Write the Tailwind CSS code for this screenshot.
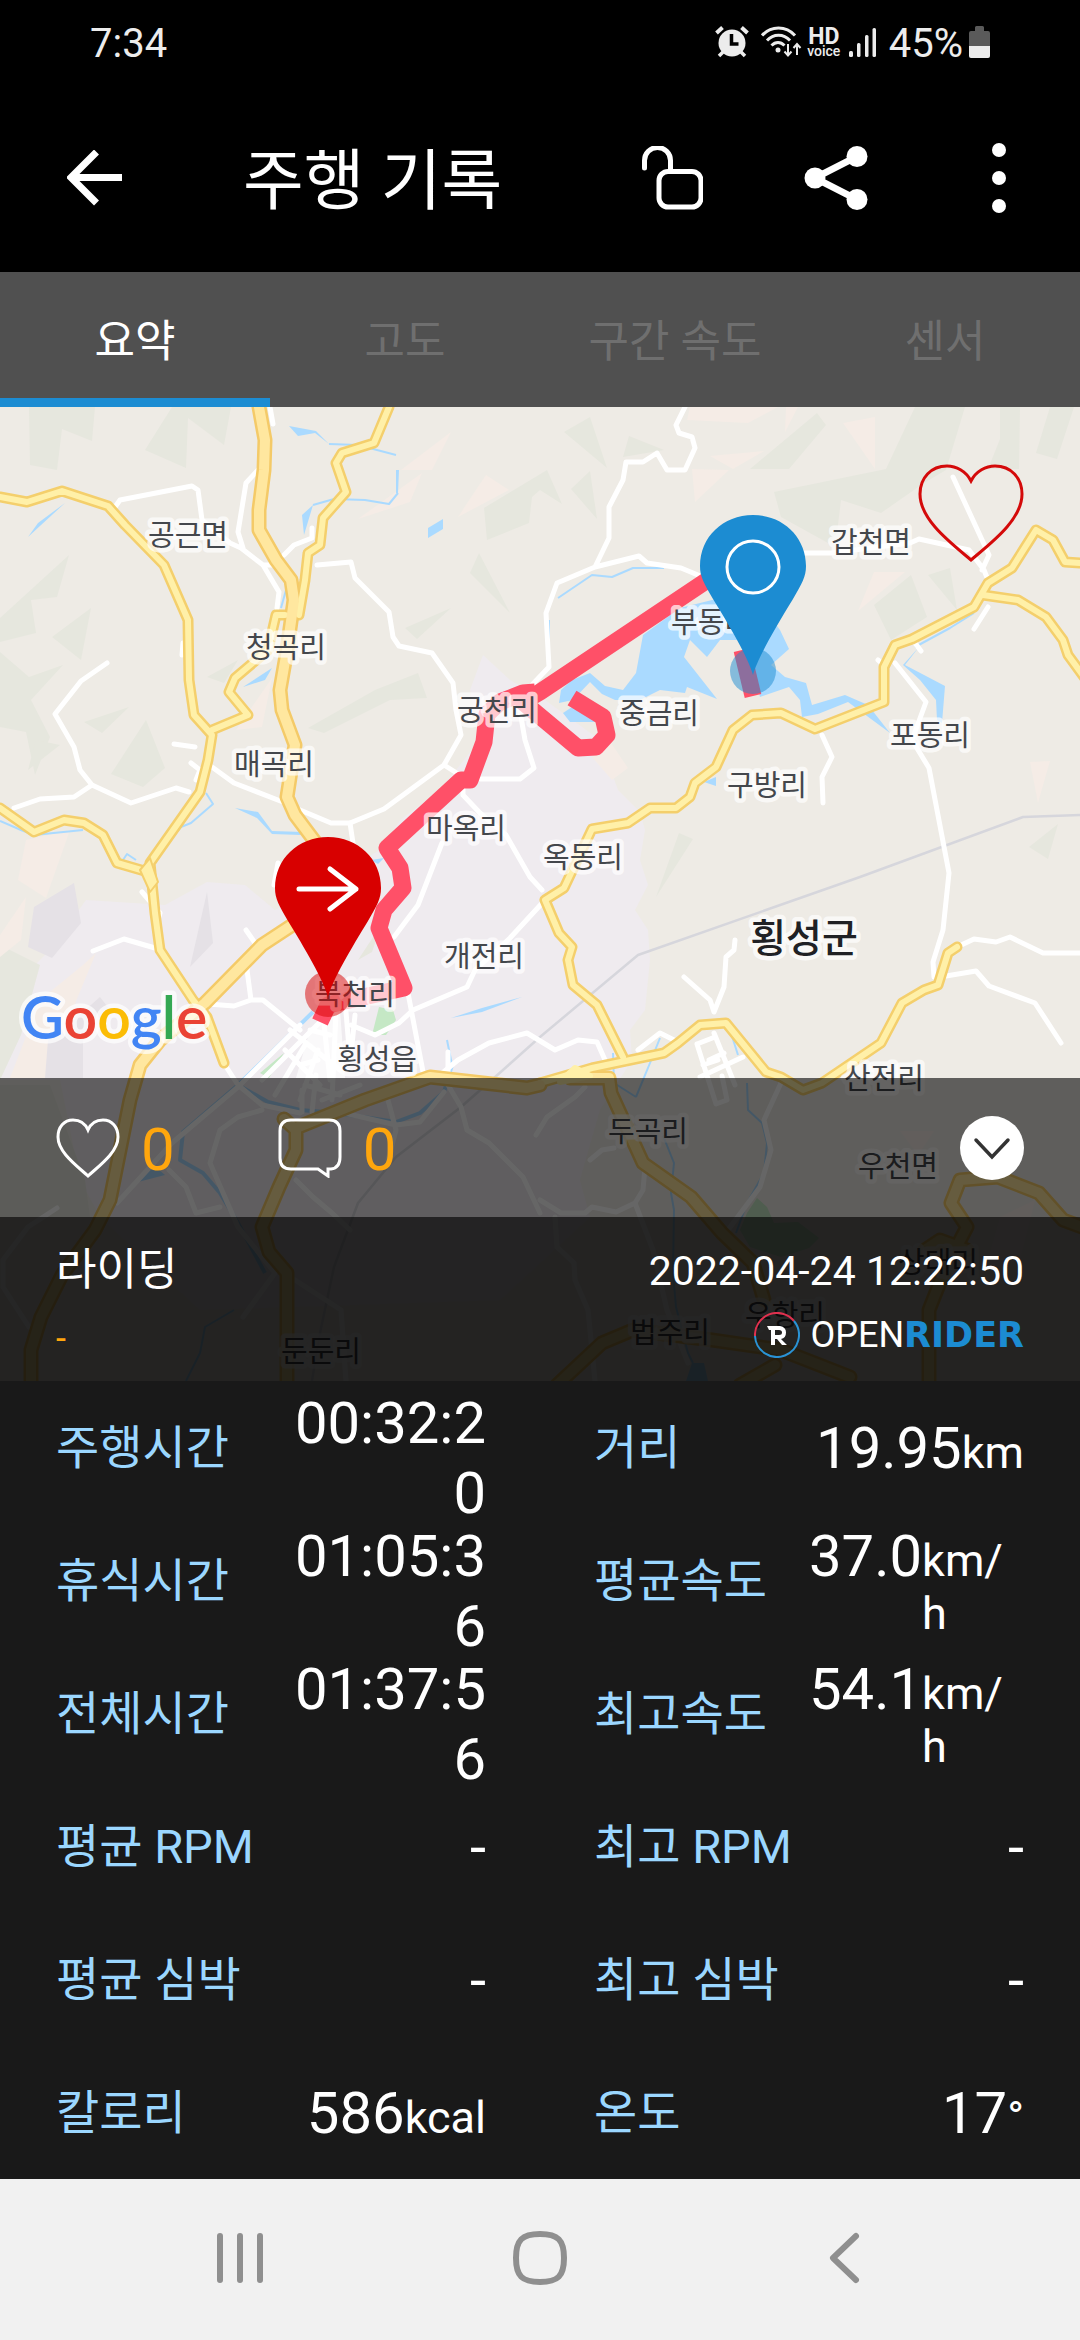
<!DOCTYPE html>
<html lang="ko">
<head>
    <meta charset="UTF-8">
    <meta name="viewport" content="width=device-width, initial-scale=1.0">
    <title>주행 기록</title>
    <script src="https://cdn.jsdelivr.net/npm/@tailwindcss/browser@4"></script>
</head>
<body class="min-h-screen flex flex-col bg-[#191919] text-white font-[Roboto,'Noto_Sans_CJK_KR',sans-serif]">

    <!-- Status bar -->
    <div class="h-[84px] flex items-center justify-between pl-[90px] pr-[90px] bg-black text-[40px] leading-none text-[#ececec]">
        <span class="pt-1">7:34</span>
        <div class="flex items-center">
            <svg class="w-[34px] h-[32px]" viewBox="0 0 34 32" fill="none" stroke="#ececec">
                <circle cx="17" cy="17" r="13.500" fill="#ececec" stroke="none"/>
                <path d="M1.500 7l6-5.500M32.500 7l-6-5.500" stroke-width="4"/>
                <path d="M8 26l-4 4M26 26l4 4" stroke-width="3.500"/>
                <path d="M16.500 8v10h7" stroke="#000" stroke-width="3.500"/>
            </svg>
            <svg class="ml-3 w-[41px] h-[32px]" viewBox="0 0 41 32" fill="none" stroke="#ececec" stroke-width="3">
                <path d="M1 9.500C10-.5 25-.5 34 9.500M6 14.500c6.500-7 16.500-7 23 0M10.500 19.500c4-4 9-4 13 0"/>
                <circle cx="17" cy="24" r="2.500" fill="#ececec" stroke="none"/>
                <path d="M27 18v11M23.500 25.500l3.500 4 3.500-4M36 29V18M32.500 22l3.500-4 3.500 4" stroke-width="2"/>
            </svg>
            <div class="ml-[5px] w-[34px] flex flex-col items-center">
                <span class="text-[23px] leading-[17px] font-bold">HD</span>
                <span class="text-[14px] leading-[12px] font-medium">voice</span>
            </div>
            <svg class="ml-2 w-[28px] h-[32px]" viewBox="0 0 28 32" fill="#ececec">
                <rect x="0" y="25" width="4" height="6" rx="1.500"/>
                <rect x="8" y="17" width="3.500" height="14" rx="1.500"/>
                <rect x="16" y="9" width="3.500" height="22" rx="1.500"/>
                <rect x="23.500" y="2" width="3.500" height="29" rx="1.500"/>
            </svg>
            <span class="ml-3 pt-1">45%</span>
            <svg class="ml-[6px] w-[21px] h-[32px]" viewBox="0 0 21 32">
                <path d="M6 1.500Q6 0 7.500 0h6Q15 0 15 1.500V5h4q2 0 2 2v13H0V7q0-2 2-2h4z" fill="#5a5a5a"/>
                <path d="M0 20h21v10q0 2-2 2H2q-2 0-2-2z" fill="#ececec"/>
            </svg>
        </div>
    </div>

    <!-- Title bar -->
    <header class="h-[188px] flex items-center pl-[67px] pr-[73px] bg-black">
        <button type="button" aria-label="뒤로">
            <svg class="block w-14 h-14" viewBox="0 0 56 56" fill="none" stroke="#fff" stroke-width="7">
                <path d="M55 27.500H6M29.500 2L4 27.500 29.500 53"/>
            </svg>
        </button>
        <h1 class="ml-[120px] pt-2 text-[66px] leading-none">주행 기록</h1>
        <button type="button" class="ml-auto" aria-label="잠금 해제">
            <svg class="block w-[62px] h-[64px]" viewBox="0 0 62 64" fill="none" stroke="#fff" stroke-width="5" stroke-linecap="round">
                <path d="M3.500 22V14.500a13 13 0 0 1 26 0V25"/>
                <rect x="18" y="25.500" width="42" height="35.500" rx="9"/>
            </svg>
        </button>
        <button type="button" class="ml-[101px]" aria-label="공유">
            <svg class="block w-[64px] h-[64px]" viewBox="0 0 64 64" fill="#fff">
                <path d="M53 10.500L11 32l42 21.500" fill="none" stroke="#fff" stroke-width="7"/>
                <circle cx="11" cy="32" r="10.500"/><circle cx="53" cy="10.500" r="10.500"/><circle cx="53" cy="53.500" r="10.500"/>
            </svg>
        </button>
        <button type="button" class="ml-[123px]" aria-label="더보기">
            <svg class="block w-4 h-[72px]" viewBox="0 0 16 72" fill="#fff">
                <circle cx="8" cy="8" r="7"/><circle cx="8" cy="36" r="7"/><circle cx="8" cy="64" r="7"/>
            </svg>
        </button>
    </header>

    <!-- Tabs -->
    <nav class="h-[135px] grid grid-cols-4 bg-[#505050] text-[44px] leading-none text-[#6f6f6f]">
        <button type="button" class="pt-1 border-t-[9px] border-t-transparent border-b-[9px] border-b-[#1c8cd2] text-white">요약</button>
        <button type="button" class="pt-1">고도</button>
        <button type="button" class="pt-1">구간 속도</button>
        <button type="button" class="pt-1">센서</button>
    </nav>

    <!-- Map with the overlay bars -->
    <section class="relative overflow-hidden">
        <svg class="absolute inset-0 w-full h-full" viewBox="0 407 1080 974" preserveAspectRatio="xMidYMin slice" stroke-linejoin="round">
            <defs>
                <g id="minor" fill="none">
                    <path d="M0 497L27 502 62 491 108 506 125 525 164 565 188 620 189 680 194 715 212 735 208 760 200 792 150 863 155 913 160 950 193 1000 207 1017 224 1063"/>
                    <path d="M389 407L374 443 342 453 336 463 346 492 323 518 320 545 308 553 305 580 299 615M285 615H276L268 650 235 678 229 692 248 715 212 730"/>
                    <path d="M0 808L34 832 64 820 84 823 103 835 117 863 148 872"/>
                    <path d="M1080 563L1065 562 1053 540 1036 530 1012 568 988 583 974 607 912 639 895 645 884 667 884 702 815 729 781 713 752 715 733 730 716 767 695 783 690 797 676 808 650 808 628 823 592 829 564 888 545 900 559 933 572 947 568 960 573 985 597 1005 623 1057"/>
                    <path d="M983 595L1018 600 1046 617 1063 640 1068 655 1090 685"/>
                    <path d="M957 947L948 953 938 985 924 990 902 1003 881 1043 822 1083 803 1090 781 1077 766 1072 726 1023 700 1025 678 1043 664 1053 592 1068 540 1083"/>
                </g>
                <g id="major" fill="none">
                    <path d="M259 407L265 440 264 470 259 510 259 530 276 560 291 580 294 600 287 650 280 690 282 710 295 745 287 797 295 815 325 855"/>
                    <path d="M300 920L262 945 205 1003 160 1040 140 1065 130 1100 110 1200 95 1230 62 1275 41 1317 31 1350V1390"/>
                    <path d="M540 1085L527 1088 430 1077 365 1100 296 1128 296 1150 279 1187 262 1227 269 1252 287 1273V1390M284 1119L296 1130"/>
                    <path d="M570 1078H609L611 1093 643 1163 691 1197 722 1233 753 1263 764 1300"/>
                    <path d="M1090 1230L1063 1220 1039 1193 998 1177 960 1180 951 1203 967 1227 946 1267 929 1310V1390"/>
                    <path d="M557 1385L602 1343 633 1330 712 1340 781 1350 850 1377M740 1385L775 1365M967 1250L940 1240 925 1250"/>
                </g>
                <g id="pin">
                    <path d="M0 0C-4-16-24-50-40-76C-49-92-53-98-53-109C-53-138-30-160 0-160S53-138 53-109C53-98 49-92 40-76C24-50 4-16 0 0Z"/>
                </g>
            </defs>

            <!-- land -->
            <rect y="407" width="1080" height="974" fill="#eeebe5"/>
            <path fill="#efebef" d="M0 1000L50 950 86 900 165 905 207 882 245 885 275 910 380 850 400 820 440 790 480 740 470 690 483 655 510 680 545 700 600 740 618 790 640 812 645 830 640 860 648 885 635 910 648 930 650 960 645 1010 630 1030 632 1060 600 1110 580 1180 590 1217 500 1300 200 1310 100 1217 80 1180 60 1080 0 1080Z"/>
            <g fill="#e6e7de">
                <path d="M29 407H95L92 441 62 429 57 470 30 465ZM172 407H231L224 445 188 418 186 468 145 450ZM69 555L57 597 31 600 36 633 0 642V618ZM91 608L81 660 52 637ZM0 652L29 677 63 665 31 700 50 737 35 775 26 732 0 727ZM84 722L129 707 102 733ZM146 720L165 768 143 787 111 774ZM479 553L510 613 470 573ZM451 608L417 639 405 628ZM418 673L427 698 390 700 324 733 308 728 375 690ZM547 470L484 508 487 540 529 523 532 497 540 490 562 504ZM207 677L238 660 224 683Z"/>
                <path d="M564 432L590 417 607 468ZM629 436L664 450 623 457ZM571 489L590 471 597 519ZM750 469L817 413 826 425 789 469ZM915 407H965L946 470 924 483 881 513 841 500 837 533 828 543 781 517 774 492 886 469ZM1000 407H1020L1019 469H988L1000 439ZM1050 407H1074L1057 459 1036 453ZM911 575L927 617 891 640 874 605ZM950 568L957 610 928 575Z"/>
                <path d="M679 833L693 839 656 897ZM1058 824L1048 859 1029 847ZM381 925L358 960 372 952ZM0 945L40 965 21 1035 0 1080ZM0 1085H50L85 1180 90 1217H0ZM28 770L36 740 60 745Z"/>
            </g>
            <g fill="#f5ece6">
                <path d="M451 432L432 470H401ZM422 473L410 502 358 519ZM486 475L509 490 458 517ZM272 678L262 727 236 730ZM690 407H778L748 423 687 420ZM786 407H798L785 432ZM843 423L875 417V469ZM710 456L764 451 733 469ZM692 469L729 470 695 502ZM874 572H905L858 611Z"/>
                <path d="M1030 762L1050 761 1038 803ZM609 740L628 768 612 780 592 757ZM26 840L70 830 46 898 18 880ZM26 897L21 940 0 957V935ZM96 953L64 1030 45 1078 10 1078 40 1000 83 965ZM900 1131H934L918 1155ZM1035 1200L1000 1217 985 1270 1020 1260Z"/>
            </g>
            <g fill="#e5e1e6">
                <path d="M74 883L81 923 52 958 28 947 34 907ZM207 892L213 943 190 967ZM100 997L110 1010 83 1040V1078H45L48 1040 74 1020Z"/>
            </g>
            <g fill="#c5e8c5">
                <path d="M379 1007L393 1010 396 1020 386 1035H372ZM284 1053L269 1078 260 1073ZM757 1198L767 1207 774 1223 798 1222 819 1238 809 1248 781 1257 750 1247 740 1230 747 1213Z"/>
            </g>

            <!-- water -->
            <g fill="#aadaff">
                <path d="M712 600L680 608 643 635 636 673 623 690 605 686 590 673 572 680 561 690 559 703 573 700 590 682 602 694 615 700H640L660 690 685 693 687 687 717 699 684 657 690 640 707 657 720 640H745L760 697 789 687 800 700 802 717 818 714 848 702 890 733 868 705 845 695 812 705 806 683 785 677 771 665 789 649 780 630 765 610 740 600Z"/>
                <path d="M563 713L570 722 595 722 575 705ZM919 647L905 665 945 686 942 723 937 720 936 700 920 680 903 665ZM289 426L316 431 329 444 315 433 298 436ZM428 528L443 519V529L428 538ZM65 503L38 523 28 537ZM243 687L272 668 265 680ZM235 808L258 812 272 831 303 832 301 835 272 834 257 818ZM704 782L716 777V786ZM138 1182L165 1175 150 1162ZM451 1018L482 1008 522 997 482 1012ZM692 1363H704L708 1381H686ZM302 515L313 505 304 535ZM396 470H399L398 493H396ZM371 860L384 858 378 864Z"/>
            </g>
            <g fill="none" stroke="#aadaff" stroke-width="2">
                <path d="M329 444L358 445 396 455M398 493L389 504 365 500 334 499 313 505M286 590L281 608M558 598L592 575 612 577 633 568H664M974 613L950 628 915 647M206 793L213 804 191 823 181 827 157 855M0 821L21 830 34 835 83 830M123 860L127 854 136 860M660 1038L650 1063 636 1097M613 1053L614 1083 636 1097M662 1133L674 1163 671 1193 674 1210 673 1273 676 1307 688 1353 693 1363M747 1083L748 1110 762 1123 767 1143 764 1173 747 1203 736 1233M452 1065L447 1040M234 1310L205 1327 200 1353 186 1381M730 1030L738 1055M549 620V665"/>
                <path stroke-width="4" d="M313 1012L238 1085 183 1132 180 1160 203 1173 220 1193 238 1223 265 1273M238 1085L268 1102 300 1110 337 1113 396 1122 420 1113 444 1092 452 1065"/>
            </g>

            <!-- power line -->
            <path fill="none" stroke="#d6d6dc" stroke-width="2.500" d="M1080 815L1023 817 860 877 638 955 540 1037 503 1070 461 1107 396 1157 358 1203 334 1267 320 1333 312 1381"/>

            <!-- local roads -->
            <g fill="none" stroke="#fff" stroke-width="5" stroke-linecap="round">
                <path d="M115 507L120 500 192 486 198 490 202 520 230 543 241 548 263 565 279 592 277 608M258 470L246 483 238 532 243 548M263 565H274M317 565L351 562 355 578 389 612 393 637 399 646 432 653 453 683 456 710 461 735 444 765 384 809 350 823H331L300 810 283 802 234 783 212 767M312 528V538L294 545 284 555M270 407L273 424M183 643L182 655"/>
                <path d="M107 663L81 681 55 714 74 747 80 770 92 785 74 797 40 799 14 808M92 785L131 803 176 788 189 792M174 744L195 747M191 763L200 770 196 780M350 823L353 843M142 892L160 913 157 923M93 951L124 939 155 948M246 930L255 943 247 970 251 1000H263L300 1030M208 1004L234 1006 251 1000M278 863L274 885"/>
                <path d="M463 795L480 813 506 835 530 877 542 890M442 843L418 905 394 937M545 900L510 938 475 970 467 987 413 1010 399 1023 375 1035 351 1025M408 993L424 1077M480 779H520L534 768 525 740 518 700M444 765L463 777 463 795M440 1075L458 1060 489 1043 527 1033 555 1050 578 1040 597 1042 605 1060"/>
                <path d="M685 407L676 425 679 433 692 437 695 448 685 470H667L657 453 643 462H626L623 480 609 507V538L595 567M710 580L681 568 647 563 639 556 595 567 557 583 546 613 549 667 530 687M800 553H831L910 543 919 539 969 550 984 570 988 580M953 477L989 555 982 570M988 607L974 629M878 660L884 665M895 663L926 702 912 740 929 768 949 873 943 930 933 962 934 977M915 643L921 651M822 735L832 757 822 777 823 803"/>
                <path d="M735 940L734 950 726 957 724 987 714 1012 710 1000 684 977M957 947L974 939 996 942 1010 937 1043 953H1080M946 976L976 971 989 986 1035 1003 1061 1043M638 1050L660 1033 674 1040M697 1044L716 1104M714 1033L735 1085M697 1044L715 1037M709 1060L724 1053M700 1077L743 1057M703 1065L718 1060M716 1104L727 1100 722 1076M781 1083L764 1120 771 1150 760 1187 728 1230M614 1148L602 1150 590 1160M645 1167L643 1190 635 1203 616 1212 592 1207 585 1213H561L540 1200M635 1203L653 1250 667 1310 688 1363M585 1087L575 1097 547 1117 536 1135M555 1217L557 1247 574 1263 575 1280 588 1310 595 1381"/>
                <path d="M225 1065L238 1085 262 1105 300 1113M300 1025L238 1087 172 1143 117 1203M262 1110L238 1117 220 1130 210 1163 238 1227 275 1273 243 1317M169 1170L186 1187 196 1213 220 1207M57 1208L28 1227 3 1260V1287L29 1327M448 1085L461 1107 467 1130 489 1143 523 1177 540 1213M295 1280L341 1310 346 1381M296 1180L313 1197 332 1213 350 1230M448 1085V1052M444 1092L420 1122 396 1125 340 1112M388 1100L396 1130 388 1160"/>
                <path d="M262 1080L330 1012M275 1095L305 1045M322 1005L330 1080M336 1012L332 1100M345 1000L350 1060M285 1050L320 1085M290 1030L340 1070M300 1100L318 1050M305 1085L340 1095M312 1112L316 1075M322 1100L360 1085M300 1065L318 1060M355 1015L352 1045M310 1030L330 1035M302 1112V1090"/>
            </g>
            <path fill="#fff" fill-opacity=".7" d="M310 1030L340 1010 345 1078H296Z"/>

            <!-- yellow roads: casing first, then fill -->
            <g stroke-linecap="round">
                <use href="#minor" stroke="#f4cf6c" stroke-width="11"/>
                <use href="#major" stroke="#f4ca68" stroke-width="15"/>
                <use href="#minor" stroke="#fff0a8" stroke-width="6"/>
                <use href="#major" stroke="#ffe79f" stroke-width="10"/>
                <path d="M140 870L150 858 158 882 150 892Z" fill="#fff0a8" stroke="#f4cf6c" stroke-width="2"/>
                <path d="M560 1082L575 1068 590 1076Z" fill="#fff0a8" stroke="#fff0a8" stroke-width="6"/>
            </g>

            <!-- ride track -->
            <g fill="none" stroke="#ff5068" stroke-width="17">
                <path stroke-linejoin="miter" d="M753 696L742 650"/>
                <path d="M715 575L540 692 523 702 578 748 596 747 607 735 603 717 572 698"/>
                <path d="M535 692L523 693 500 702 487 714 484 742 470 780 461 780 387 848 400 868 403 888 384 910 379 928 404 988 345 1001 328 1005 320 1022"/>
            </g>

            <!-- place names -->
            <g class="font-['Noto_Sans_CJK_KR',sans-serif]" font-size="29" fill="#44474c" text-anchor="middle" stroke="#fff" stroke-opacity=".7" stroke-width="9" paint-order="stroke">
                <text x="188" y="546">공근면</text>
                <text x="286" y="658">청곡리</text>
                <text x="274" y="775">매곡리</text>
                <text x="497" y="721">궁천리</text>
                <text x="711" y="633">부동리</text>
                <text x="659" y="724">중금리</text>
                <text x="871" y="553">갑천면</text>
                <text x="930" y="746">포동리</text>
                <text x="767" y="796">구방리</text>
                <text x="583" y="868">옥동리</text>
                <text x="466" y="839">마옥리</text>
                <text x="484" y="967">개전리</text>
                <text x="355" y="1005">북천리</text>
                <text x="377" y="1070">횡성읍</text>
                <text x="804" y="952" font-size="39" font-weight="500" fill="#202124">횡성군</text>
                <text x="884" y="1089">산전리</text>
                <text x="648" y="1142">두곡리</text>
                <text x="898" y="1177">우천면</text>
                <text x="321" y="1362">둔둔리</text>
                <text x="670" y="1343">법주리</text>
                <text x="785" y="1326">우항리</text>
                <text x="938" y="1273">상대리</text>
            </g>

            <!-- start and finish pins -->
            <circle cx="753" cy="671" r="23" fill="#1c8cd2" fill-opacity=".5"/>
            <use href="#pin" x="753" y="675" fill="#1c8cd2"/>
            <circle cx="753" cy="567" r="26" fill="none" stroke="#fff" stroke-width="3"/>
            <circle cx="328" cy="994" r="23" fill="#d80000" fill-opacity=".5"/>
            <use href="#pin" x="328" y="997" fill="#d80000"/>
            <path d="M299 889H356M330 869L356 889 330 909" fill="none" stroke="#fff" stroke-width="5" stroke-linecap="round"/>

            <!-- Google mark -->
            <g class="font-[Lato,sans-serif]" font-size="59" font-weight="600" stroke="#fff" stroke-opacity=".7" stroke-width="9" paint-order="stroke">
                <text x="21" y="1039"><tspan fill="#4285f4">G</tspan><tspan fill="#ea4335">o</tspan><tspan fill="#fbbc05">o</tspan><tspan fill="#4285f4">g</tspan><tspan fill="#34a853">l</tspan><tspan fill="#ea4335">e</tspan></text>
            </g>
        </svg>

        <div class="relative h-[671px] flex items-start justify-end pt-14 pr-14">
            <button type="button" aria-label="즐겨찾기">
                <svg class="block w-[106px] h-[100px]" viewBox="0 0 106 100" fill="none" stroke="#d40a0a" stroke-width="3">
                    <path d="M53 18C48 8 38 3 29 3C13 3 2 15 2 31C2 57 33 80 53 97C73 80 104 57 104 31C104 15 93 3 77 3C68 3 58 8 53 18Z"/>
                </svg>
            </button>
        </div>

        <div class="relative h-[139px] flex items-center px-14 bg-black/60 text-[60px] leading-none text-[#ffa60d]">
            <button type="button" class="flex items-center gap-[21px]" aria-label="좋아요 0">
                <svg class="w-16 h-[60px]" viewBox="0 0 64 60" fill="none" stroke="#fff" stroke-width="3">
                    <path d="M32 12C29 5 23 2 17 2C8 2 2 9 2 19C2 34 20 47 32 58C44 47 62 34 62 19C62 9 56 2 47 2C41 2 35 5 32 12Z"/>
                </svg>
                <span class="pt-1">0</span>
            </button>
            <button type="button" class="ml-[103px] flex items-center gap-[21px]" aria-label="댓글 0">
                <svg class="w-16 h-[60px]" viewBox="0 0 64 60" fill="none" stroke="#fff" stroke-width="3">
                    <path d="M13 2H51Q62 2 62 13V39Q62 50 53 51H50V58L40 51H13Q2 51 2 40V13Q2 2 13 2Z"/>
                </svg>
                <span class="pt-1">0</span>
            </button>
            <button type="button" class="ml-auto" aria-label="접기">
                <svg class="block w-16 h-16" viewBox="0 0 64 64">
                    <circle cx="32" cy="32" r="32" fill="#fff"/>
                    <path d="M16 24L32 41 48 24" fill="none" stroke="#333" stroke-width="3.500" stroke-linecap="round"/>
                </svg>
            </button>
        </div>

        <div class="relative h-[164px] flex justify-between px-14 pt-7 bg-black/85">
            <div>
                <h2 class="text-[44px] leading-[50px]">라이딩</h2>
                <p class="mt-5 text-[36px] leading-[48px] text-[#ffa60d]">-</p>
            </div>
            <div class="flex flex-col items-end">
                <p class="text-[41px] leading-[52px]">2022-04-24 12:22:50</p>
                <div class="mt-[15px] flex items-center text-[36px] leading-[46px]">
                    <svg class="mr-[10px] w-[46px] h-[46px]" viewBox="0 0 46 46" fill="none" stroke-width="2">
                        <path d="M1 24A22 22 0 0 1 40 9" stroke="#e0314f"/>
                        <path d="M1 24A22 22 0 1 0 40 9" stroke="#2a93d5"/>
                        <path d="M13 14H26Q32 15 32 20.500T27 27L33 33H28L23 27H21V33H17V18H15Z" fill="#fff"/>
                        <path d="M21 18V23H25Q28 23 28 20.500T25 18Z" fill="#242322"/>
                    </svg>
                    <span>OPEN</span><span class="text-[35px] font-['DejaVu_Sans',sans-serif] font-bold text-[#1c8cd2]">RIDER</span>
                </div>
            </div>
        </div>
    </section>

    <!-- Ride figures -->
    <dl class="grid grid-cols-2 text-[58px] leading-[70px]">
        <div class="h-[133px] pl-14 pr-[54px] grid grid-cols-2 items-center">
            <dt class="text-[47px] leading-none text-[#9bd7ff]">주행시간</dt>
            <dd class="max-h-[120px] text-right break-all">00:32:20</dd>
        </div>
        <div class="h-[133px] pl-[54px] pr-14 grid grid-cols-2 items-center">
            <dt class="text-[47px] leading-none text-[#9bd7ff]">거리</dt>
            <dd class="flex items-baseline justify-end">19.95<span class="text-[45px] leading-[53px]">km</span></dd>
        </div>
        <div class="h-[133px] pl-14 pr-[54px] grid grid-cols-2 items-center">
            <dt class="text-[47px] leading-none text-[#9bd7ff]">휴식시간</dt>
            <dd class="max-h-[120px] text-right break-all">01:05:36</dd>
        </div>
        <div class="h-[133px] pl-[54px] pr-14 grid grid-cols-2 items-center">
            <dt class="text-[47px] leading-none text-[#9bd7ff]">평균속도</dt>
            <dd class="flex items-baseline justify-end">37.0<span class="min-w-0 text-[45px] leading-[53px] break-all">km/h</span></dd>
        </div>
        <div class="h-[133px] pl-14 pr-[54px] grid grid-cols-2 items-center">
            <dt class="text-[47px] leading-none text-[#9bd7ff]">전체시간</dt>
            <dd class="max-h-[120px] text-right break-all">01:37:56</dd>
        </div>
        <div class="h-[133px] pl-[54px] pr-14 grid grid-cols-2 items-center">
            <dt class="text-[47px] leading-none text-[#9bd7ff]">최고속도</dt>
            <dd class="flex items-baseline justify-end">54.1<span class="min-w-0 text-[45px] leading-[53px] break-all">km/h</span></dd>
        </div>
        <div class="h-[133px] pl-14 pr-[54px] grid grid-cols-2 items-center">
            <dt class="text-[47px] leading-none text-[#9bd7ff]">평균 RPM</dt>
            <dd class="text-right">-</dd>
        </div>
        <div class="h-[133px] pl-[54px] pr-14 grid grid-cols-2 items-center">
            <dt class="text-[47px] leading-none text-[#9bd7ff]">최고 RPM</dt>
            <dd class="text-right">-</dd>
        </div>
        <div class="h-[133px] pl-14 pr-[54px] grid grid-cols-2 items-center">
            <dt class="text-[47px] leading-none text-[#9bd7ff]">평균 심박</dt>
            <dd class="text-right">-</dd>
        </div>
        <div class="h-[133px] pl-[54px] pr-14 grid grid-cols-2 items-center">
            <dt class="text-[47px] leading-none text-[#9bd7ff]">최고 심박</dt>
            <dd class="text-right">-</dd>
        </div>
        <div class="h-[133px] pl-14 pr-[54px] grid grid-cols-2 items-center">
            <dt class="text-[47px] leading-none text-[#9bd7ff]">칼로리</dt>
            <dd class="flex items-baseline justify-end">586<span class="text-[45px] leading-[53px]">kcal</span></dd>
        </div>
        <div class="h-[133px] pl-[54px] pr-14 grid grid-cols-2 items-center">
            <dt class="text-[47px] leading-none text-[#9bd7ff]">온도</dt>
            <dd class="flex items-baseline justify-end">17<span class="text-[45px] leading-[53px]">°</span></dd>
        </div>
    </dl>

    <!-- System navigation -->
    <footer class="flex-1 min-h-[160px] px-[90px] pb-1 grid grid-cols-3 place-items-center bg-[#f1f1f1]">
        <button type="button" aria-label="최근 앱">
            <svg class="block w-14 h-14" viewBox="0 0 56 56" fill="none" stroke="#8f8f8f" stroke-width="6" stroke-linecap="round">
                <path d="M8 6V50M28 6V50M48 6V50"/>
            </svg>
        </button>
        <button type="button" aria-label="홈">
            <svg class="block w-14 h-14" viewBox="0 0 56 56" fill="none" stroke="#8f8f8f" stroke-width="6">
                <path d="M28 4C46 4 52 10 52 28S46 52 28 52S4 46 4 28S10 4 28 4Z"/>
            </svg>
        </button>
        <button type="button" aria-label="이전">
            <svg class="block w-14 h-14" viewBox="0 0 56 56" fill="none" stroke="#8f8f8f" stroke-width="6" stroke-linecap="round" stroke-linejoin="round">
                <path d="M44 6L21 28 44 50"/>
            </svg>
        </button>
    </footer>
</body>
</html>
